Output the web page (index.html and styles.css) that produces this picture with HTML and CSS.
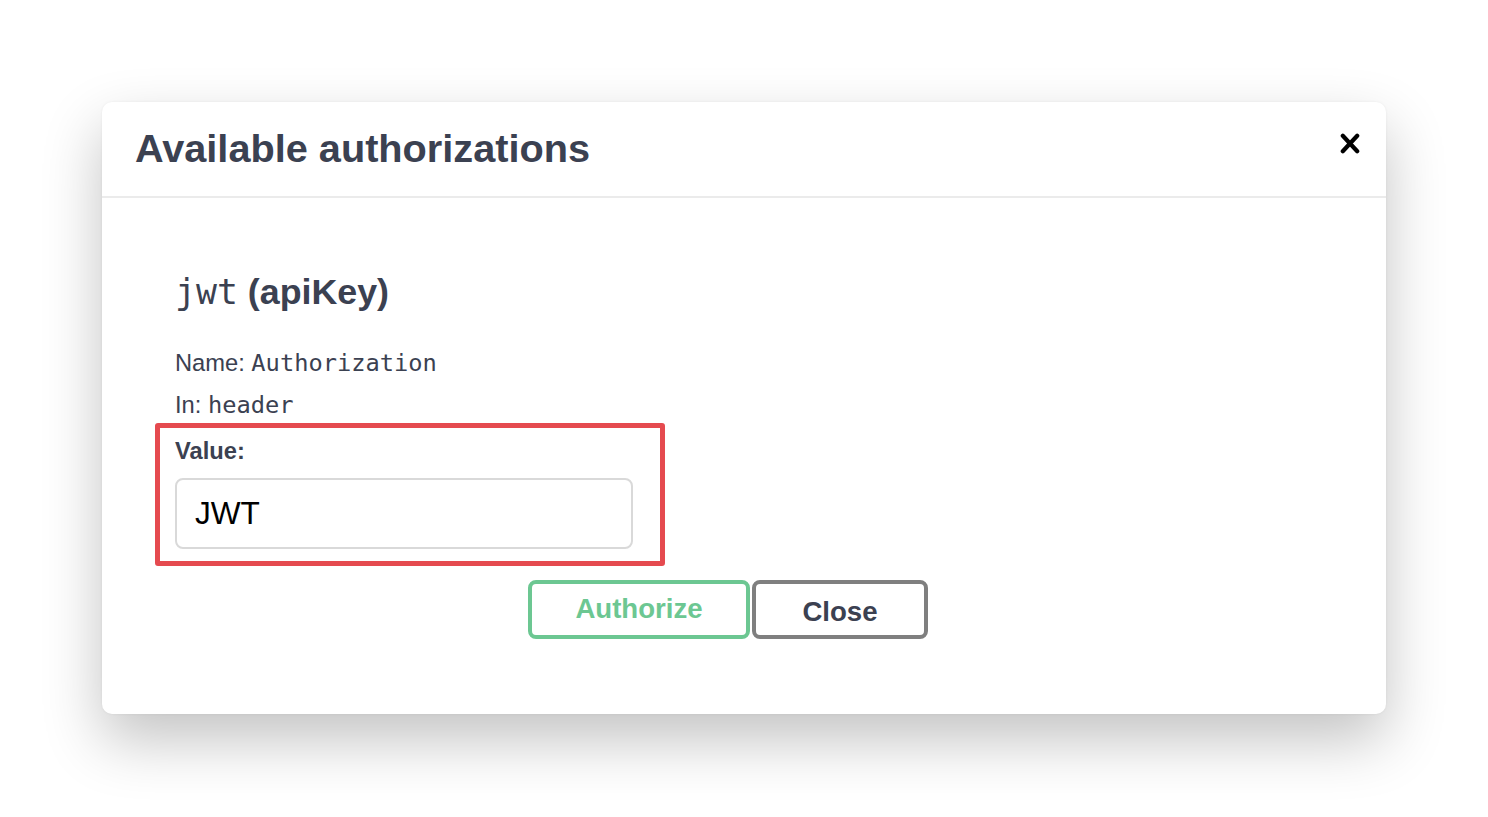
FILE: index.html
```html
<!DOCTYPE html>
<html lang="en">
<head>
<meta charset="utf-8">
<title>Available authorizations</title>
<link rel="stylesheet" href="styles.css">
</head>
<body>
<div class="modal">
  <div class="modal-header">
    <h3 class="modal-title">Available authorizations</h3>
    <button class="close-btn" aria-label="Close">
      <svg width="20" height="21" viewBox="0 0 20 21"><path d="M2.8 2.8 L17.2 18.2 M17.2 2.8 L2.8 18.2" stroke="#000" stroke-width="4.2" stroke-linecap="round" fill="none"/></svg>
    </button>
  </div>
  <div class="modal-content">
    <h4 class="scheme"><code class="mono">jwt</code> (apiKey)</h4>
    <p class="meta">Name: <code class="mono">Authorization</code></p>
    <p class="meta">In: <code class="mono">header</code></p>
    <div class="highlight">
      <label class="field-label" for="val">Value:</label>
      <input class="field-input" id="val" type="text" value="JWT">
    </div>
    <div class="btn-row">
      <button class="btn btn-authorize">Authorize</button>
      <button class="btn btn-close">Close</button>
    </div>
  </div>
</div>
</body>
</html>
```
FILE: styles.css
```css
html, body {
  margin: 0;
  background: #ffffff;
}
body {
  box-sizing: border-box;
  min-height: 100vh;
  padding: 102px 0 0 102px;
  font-family: "Liberation Sans", Arial, sans-serif;
  color: #3b4151;
}
.modal {
  width: 1284px;
  background: #ffffff;
  border-radius: 10px;
  box-shadow: 0 26px 60px rgba(0, 0, 0, 0.24), 0 0 3px rgba(0, 0, 0, 0.06);
}
.modal-header {
  display: flex;
  align-items: flex-start;
  padding: 23px 26px 25px 33px;
  border-bottom: 2px solid #ebebeb;
}
.modal-title {
  flex: 1;
  margin: 0;
  font-size: 39.7px;
  line-height: 46px;
  font-weight: 700;
  color: #3b4151;
}
.close-btn {
  margin-top: 8px;
  padding: 0;
  border: 0;
  background: none;
  line-height: 0;
  cursor: pointer;
}
.modal-content {
  padding: 74px 105px 75px 73px;
}
.mono {
  font-family: "DejaVu Sans Mono", Menlo, monospace;
  font-weight: 400;
}
.scheme {
  margin: 0 0 34px;
  font-size: 35.8px;
  line-height: 41px;
  font-weight: 700;
}
.scheme .mono {
  font-size: 34.8px;
}
.meta {
  margin: 0 0 10px;
  font-size: 23.7px;
  line-height: 32px;
}
.meta .mono {
  font-size: 23.7px;
}
.highlight {
  width: 510px;
  box-sizing: border-box;
  margin: -8px 0 0 -20px;
  padding: 10px 27px 12px 15px;
  border: 5px solid #e54a4f;
  border-radius: 3px;
}
.field-label {
  display: block;
  margin-bottom: 13px;
  font-size: 23.7px;
  line-height: 27px;
  font-weight: 700;
}
.field-input {
  display: block;
  width: 458px;
  height: 71px;
  box-sizing: border-box;
  margin: 0;
  padding: 0 18px;
  border: 2px solid #d9d9d9;
  border-radius: 8px;
  font-family: "Liberation Sans", Arial, sans-serif;
  font-size: 31.6px;
  color: #000000;
  background: #ffffff;
  outline: none;
}
.btn-row {
  display: flex;
  justify-content: center;
  gap: 2px;
  margin-top: 14px;
}
.btn {
  box-sizing: border-box;
  height: 59px;
  border: 4px solid #7f7f7f;
  border-radius: 8px;
  background: #ffffff;
  font-family: "Liberation Sans", Arial, sans-serif;
  font-size: 27.6px;
  font-weight: 700;
  line-height: 31px;
  cursor: pointer;
}
.btn-authorize {
  width: 222px;
  padding: 9px 0 11px;
  border-color: #6cc792;
  color: #6cc792;
}
.btn-close {
  width: 176px;
  padding: 12px 0 8px;
  color: #3b4151;
}
```
